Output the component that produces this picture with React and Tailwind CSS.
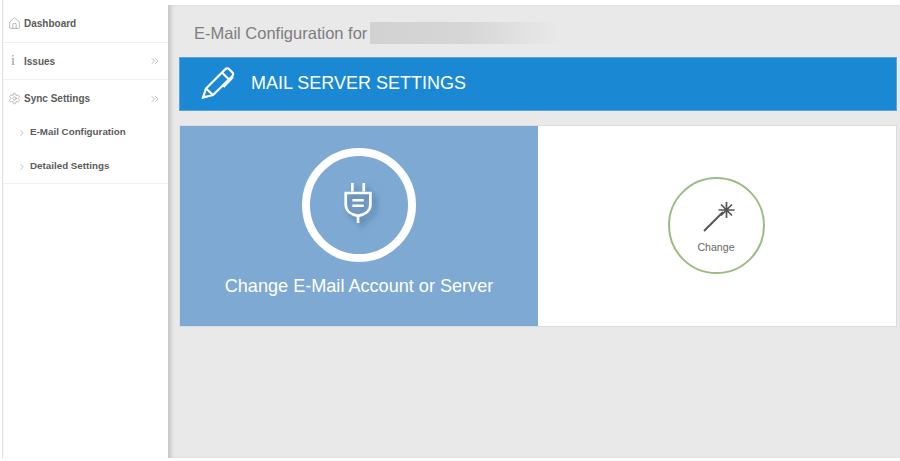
import React from "react";
import { ChevronRight, ChevronsRight, House, Settings } from "lucide-react";

const NavRow = ({ icon, label, arrow, className }) => (
  <div className={`flex items-center pl-[5px] pr-[7px] ${className}`}>
    <span className="w-[16px] flex justify-start text-[#777]">{icon}</span>
    <span className="text-[10px] font-bold text-[#5c5c5c]">{label}</span>
    {arrow && <ChevronsRight size={12} strokeWidth={1.2} className="ml-auto text-[#8f8f8f]" />}
  </div>
);

const SubRow = ({ label }) => (
  <div className="flex items-center h-[34px] pl-[14px] pt-[1px]">
    <ChevronRight size={10} strokeWidth={1.2} className="text-[#888] mr-[3px]" />
    <span className="text-[9.8px] font-bold text-[#5c5c5c]">{label}</span>
  </div>
);

const Plug = () => (
  <svg width="38" height="48" viewBox="0 0 40 50" fill="none" stroke="white" className="-mt-[4px] drop-shadow-[4px_4px_3px_rgba(50,80,120,0.6)]">
    <path d="M13 4v9M25 4v9" strokeWidth="2.8" />
    <path d="M6 14.500h26v12c0 7-6 11-13 12c-7-1-13-5-13-12z" strokeWidth="2.800" />
    <path d="M13 22h12M13 28h12" strokeWidth="2.600" />
    <path d="M19 38v8" strokeWidth="2.800" />
  </svg>
);

const Wand = () => (
  <svg width="34" height="34" viewBox="0 0 34 34" fill="none" stroke="#555" className="block">
    <path d="M2 31L21 12" strokeWidth="1.9" />
    <path d="M24.500 2v16M16.500 10h16M19 4.500l11 11M30 4.500l-11 11" strokeWidth="1.700" />
  </svg>
);

const Pencil = () => (
  <svg width="35" height="33" viewBox="0 0 35 33" fill="none" stroke="white" strokeWidth="2.200" className="block -mt-[3px]">
    <path d="M2 31.500l3-9L24 3.500c1.500-1.500 3-1.500 4.500 0l2.500 2.500c1.500 1.500 1.500 3 0 4.500L12 29z" />
    <path d="M5 22.500l7 6.500M21 6.500l7 7M32 11L22.500 21" />
    <path d="M2 31.500l3.500-1" />
  </svg>
);

export default function App() {
  return (
    <div className="w-[900px] h-[461px] bg-white flex font-['Liberation_Sans',Arial,sans-serif] overflow-hidden">
      <aside className="w-[166px] h-[458px] ml-[2px] shrink-0 bg-white border-l border-[#ddd]">
        <NavRow icon={<House size={13} strokeWidth={0.9} />} label="Dashboard" className="h-[43px] pt-[4px] border-b border-[#f0f0f0]" />
        <NavRow icon={<span className="text-[14px] leading-none font-['Liberation_Serif',serif] font-light pl-[3px] text-[#999]">i</span>} label="Issues" arrow className="h-[37px] border-b border-[#f0f0f0]" />
        <NavRow icon={<Settings size={13} strokeWidth={0.9} />} label="Sync Settings" arrow className="h-[35px] pt-[2px]" />
        <div className="border-b border-[#f0f0f0]">
          <SubRow label="E-Mail Configuration" />
          <SubRow label="Detailed Settings" />
        </div>
      </aside>

      <main className="flex-1 h-[453px] mt-[5px] bg-[#e9e9e9] pl-[11px] pr-[3px] shadow-[inset_5px_0_4px_-2px_rgba(0,0,0,0.16)]">
        <div className="h-[52px] flex items-center pl-[15px] pt-[4px]">
          <h1 className="text-[16.500px] text-[#7d7d7d] font-normal leading-none">E-Mail Configuration for</h1>
          <div className="ml-[3px] w-[190px] h-[22px] bg-gradient-to-r from-[#d2d2d2] via-[#d6d6d6] to-[#e9e9e9]" />
        </div>

        <div className="h-[54px] bg-[#1a88d2] border border-[#5aa6dc] flex items-center pl-[21px]">
          <Pencil />
          <h2 className="ml-[15px] -mt-[2px] text-[18px] text-white font-normal leading-none">MAIL SERVER SETTINGS</h2>
        </div>

        <div className="mt-[14px] h-[202px] flex bg-white border border-[#dcdcdc]">
          <div className="w-[358px] bg-[#7da9d3] flex flex-col items-center pt-[22px]">
            <div className="w-[114px] h-[114px] rounded-full border-[8px] border-white flex items-center justify-center">
              <Plug />
            </div>
            <p className="mt-[15px] text-[18.100px] leading-none text-white">Change E-Mail Account or Server</p>
          </div>
          <div className="flex-1 flex items-center justify-center">
            <div className="w-[97px] h-[97px] -mt-[2px] -ml-[2px] rounded-full border-2 border-[#9dbb85] flex flex-col items-center pt-[21px]">
              <div className="ml-[5px]"><Wand /></div>
              <span className="mt-[8px] text-[10.600px] leading-none text-[#666]">Change</span>
            </div>
          </div>
        </div>
      </main>
    </div>
  );
}
